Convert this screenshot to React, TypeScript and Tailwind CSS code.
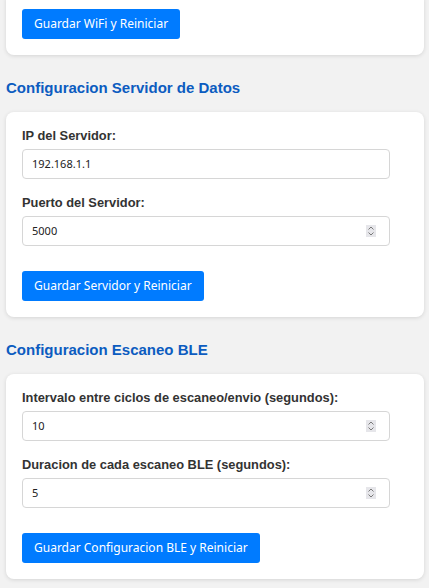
import React from "react";

const Spinner = () => (
  <div className="absolute right-[13px] top-1/2 -translate-y-1/2 w-[10px] h-[12px] bg-[#e6e6ea] flex items-center justify-center">
    <svg width="10" height="12" viewBox="0 0 10 12" fill="none" stroke="#7a7a7a" strokeWidth="1">
      <path d="M2.5 4.5 L5 2 L7.5 4.5" />
      <path d="M2.5 7.5 L5 10 L7.5 7.5" />
    </svg>
  </div>
);

const Field = ({ label, value, number }: { label: string; value: string; number?: boolean }) => (
  <div className="flex flex-col">
    <div className="text-[12.85px] leading-[15px] font-bold text-[#333333] mb-[6px] [font-family:'Liberation_Sans',Arial,sans-serif]">
      {label}
    </div>
    <div className="relative w-[368px] h-[30px] border border-[#d6d6d6] rounded-[4px] bg-white flex items-center pl-[9px] text-[11px] text-[#222222] [font-family:'Noto_Sans',sans-serif]">
      {value}
      {number && <Spinner />}
    </div>
  </div>
);

const Btn = ({ children }: { children: React.ReactNode }) => (
  <div className="self-start h-[30px] px-[12px] flex items-center bg-[#007bff] text-white rounded-[3px] text-[12px] [font-family:'Noto_Sans',sans-serif]">
    {children}
  </div>
);

const Card = ({ children, className = "" }: { children: React.ReactNode; className?: string }) => (
  <div className={"w-[418px] bg-white rounded-[8px] shadow-[0_1px_4px_rgba(0,0,0,0.12)] p-[16px] flex flex-col " + className}>
    {children}
  </div>
);

const Heading = ({ children }: { children: React.ReactNode }) => (
  <h3 className="mt-6 mb-4 text-[15px] leading-[17px] font-bold text-[#0c5cc0] [font-family:'Liberation_Sans',Arial,sans-serif]">
    {children}
  </h3>
);

export default function App() {
  return (
    <div className="min-h-[588px] bg-[#f2f2f2] overflow-hidden">
      <div className="pl-[6px] flex flex-col">
        <Card className="-mt-[7px]">
          <Btn>Guardar WiFi y Reiniciar</Btn>
        </Card>
        <Heading>Configuracion Servidor de Datos</Heading>
        <Card>
          <div className="flex flex-col gap-[16px]">
            <Field label="IP del Servidor:" value="192.168.1.1" />
            <Field label="Puerto del Servidor:" value="5000" number />
          </div>
          <div className="mt-[25px] flex">
            <Btn>Guardar Servidor y Reiniciar</Btn>
          </div>
        </Card>
        <Heading>Configuracion Escaneo BLE</Heading>
        <Card>
          <div className="flex flex-col gap-[16px]">
            <Field label="Intervalo entre ciclos de escaneo/envio (segundos):" value="10" number />
            <Field label="Duracion de cada escaneo BLE (segundos):" value="5" number />
          </div>
          <div className="mt-[25px] flex">
            <Btn>Guardar Configuracion BLE y Reiniciar</Btn>
          </div>
        </Card>
      </div>
    </div>
  );
}
